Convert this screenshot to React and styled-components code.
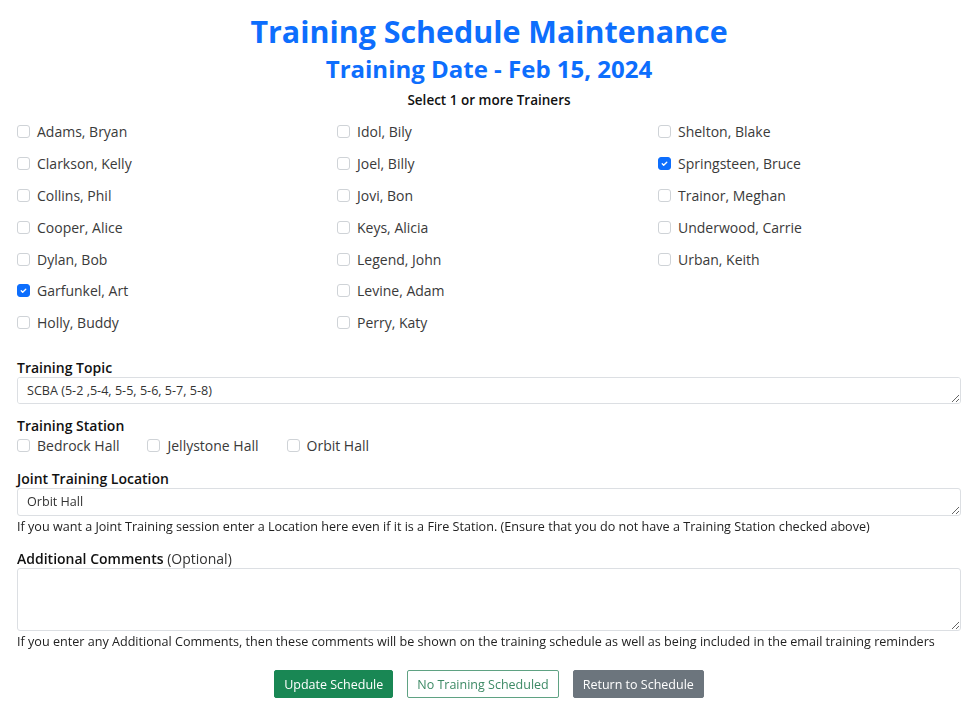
import { useState } from 'react'
import styled, { createGlobalStyle } from 'styled-components'

const GlobalStyle = createGlobalStyle`
  body {
    margin: 0;
    background: #fff;
    font-family: 'Open Sans', 'Liberation Sans', sans-serif;
    color: #212529;
  }
`

const trainers = [
  ['Adams, Bryan', 'Clarkson, Kelly', 'Collins, Phil', 'Cooper, Alice', 'Dylan, Bob', 'Garfunkel, Art', 'Holly, Buddy'],
  ['Idol, Bily', 'Joel, Billy', 'Jovi, Bon', 'Keys, Alicia', 'Legend, John', 'Levine, Adam', 'Perry, Katy'],
  ['Shelton, Blake', 'Springsteen, Bruce', 'Trainor, Meghan', 'Underwood, Carrie', 'Urban, Keith'],
]

const stations = ['Bedrock Hall', 'Jellystone Hall', 'Orbit Hall']

function Check({ checked, onToggle, label }) {
  return (
    <CheckLabel onClick={onToggle}>
      <Box $checked={checked}>
        {checked && (
          <svg width="9" height="9" viewBox="0 0 20 20">
            <path d="M5 10.5l3.2 3.2L15 7" fill="none" stroke="#fff" strokeWidth="3" strokeLinecap="round" strokeLinejoin="round" />
          </svg>
        )}
      </Box>
      <span>{label}</span>
    </CheckLabel>
  )
}

function App() {
  const [picked, setPicked] = useState({ 'Garfunkel, Art': true, 'Springsteen, Bruce': true })
  const [station, setStation] = useState({})
  const toggle = name => setPicked({ ...picked, [name]: !picked[name] })

  return (
    <Page>
      <GlobalStyle />
      <Title>Training Schedule Maintenance</Title>
      <SubTitle>Training Date - Feb 15, 2024</SubTitle>
      <Prompt>Select 1 or more Trainers</Prompt>

      <TrainerGrid>
        {trainers.map((col, i) => (
          <Column key={i}>
            {col.map(name => (
              <Check key={name} label={name} checked={!!picked[name]} onToggle={() => toggle(name)} />
            ))}
          </Column>
        ))}
      </TrainerGrid>

      <FieldLabel>Training Topic</FieldLabel>
      <TextBox rows={1} defaultValue="SCBA (5-2 ,5-4, 5-5, 5-6, 5-7, 5-8)" $height={27} />

      <FieldLabel>Training Station</FieldLabel>
      <StationRow>
        {stations.map(s => (
          <Check key={s} label={s} checked={!!station[s]} onToggle={() => setStation({ ...station, [s]: !station[s] })} />
        ))}
      </StationRow>

      <FieldLabel>Joint Training Location</FieldLabel>
      <TextBox rows={1} defaultValue="Orbit Hall" $height={28} />
      <Help>If you want a Joint Training session enter a Location here even if it is a Fire Station. (Ensure that you do not have a Training Station checked above)</Help>

      <FieldLabel>Additional Comments <Optional>(Optional)</Optional></FieldLabel>
      <TextBox rows={3} defaultValue="" $height={63} />
      <Help>If you enter any Additional Comments, then these comments will be shown on the training schedule as well as being included in the email training reminders</Help>

      <Buttons>
        <Button $variant="success">Update Schedule</Button>
        <Button $variant="outline">No Training Scheduled</Button>
        <Button $variant="secondary">Return to Schedule</Button>
      </Buttons>
    </Page>
  )
}

export default App

const Page = styled.div`
  display: flex;
  flex-direction: column;
  padding: 12px 12px 14px 17px;
`

const Title = styled.h1`
  margin: 0;
  text-align: center;
  font-size: 30.4px;
  line-height: 40px;
  font-weight: 700;
  color: #0d6efd;
`

const SubTitle = styled.h2`
  margin: 0;
  text-align: center;
  font-size: 24px;
  line-height: 34px;
  font-weight: 700;
  color: #0d6efd;
`

const Prompt = styled.div`
  text-align: center;
  font-size: 13.5px;
  font-weight: 600;
  line-height: 28px;
  color: #111;
`

const TrainerGrid = styled.div`
  display: grid;
  grid-template-columns: 320px 321px 1fr;
  margin: 2px 0 7px;
`

const Column = styled.div`
  display: flex;
  flex-direction: column;
`

const CheckLabel = styled.label`
  display: flex;
  align-items: center;
  gap: 7px;
  height: 31.8px;
  font-size: 14px;
  color: #3a3a3a;
  cursor: pointer;
  user-select: none;
`

const Box = styled.span`
  width: 13px;
  height: 13px;
  box-sizing: border-box;
  border-radius: 3px;
  border: 1px solid ${p => (p.$checked ? '#0d6efd' : '#cfd3d7')};
  background: ${p => (p.$checked ? '#0d6efd' : '#fff')};
  display: flex;
  align-items: center;
  justify-content: center;
  flex-shrink: 0;
`

const FieldLabel = styled.div`
  font-size: 14px;
  font-weight: 600;
  line-height: 20px;
  color: #111;
  margin-top: 12px;
  margin-bottom: -1px;
`

const Optional = styled.span`
  font-weight: 400;
  color: #333;
`

const TextBox = styled.textarea`
  display: block;
  box-sizing: border-box;
  width: 100%;
  height: ${p => p.$height}px;
  margin: 0;
  padding: 5px 9px;
  border: 1px solid #dcdfe3;
  border-radius: 3px;
  font-family: 'Open Sans', 'Liberation Sans', sans-serif;
  font-size: 12.6px;
  line-height: 16px;
  color: #333;
  resize: vertical;
  outline: none;
`

const StationRow = styled.div`
  display: flex;
  gap: 28px;
  margin: -5px 0 -4px;
`

const Help = styled.div`
  margin-top: 1px;
  font-size: 12.6px;
  line-height: 20px;
  color: #222;
`

const variants = {
  success: 'background: #198754; color: #fff; border-color: #198754;',
  outline: 'background: #fff; color: #3d8a65; border-color: #5fa283;',
  secondary: 'background: #6c757d; color: #fff; border-color: #6c757d;',
}

const Buttons = styled.div`
  display: flex;
  justify-content: center;
  gap: 14px;
  margin-top: 18px;
`

const Button = styled.button`
  height: 28px;
  padding: 0 9px;
  border: 1px solid;
  border-radius: 2px;
  font-family: 'Open Sans', 'Liberation Sans', sans-serif;
  font-size: 12.5px;
  font-weight: 500;
  cursor: pointer;
  ${p => variants[p.$variant]}
`
